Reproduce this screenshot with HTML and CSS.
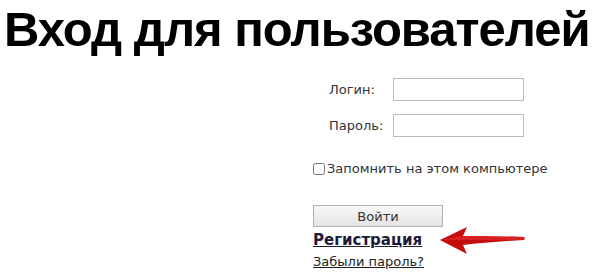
FILE: index.html
```html
<!DOCTYPE html>
<html lang="ru">
<head>
  <meta charset="UTF-8">
  <meta name="viewport" content="width=device-width, initial-scale=1.0">
  <title>Вход для пользователей</title>
  <link rel="stylesheet" href="styles.css">
</head>
<body>
  <h1 class="title">Вход для пользователей</h1>
  <div class="login">
    <form class="login-form">
      <table class="fields">
        <tr>
          <td class="label">Логин:</td>
          <td><input type="text" class="field"></td>
        </tr>
        <tr>
          <td class="label">Пароль:</td>
          <td><input type="password" class="field"></td>
        </tr>
      </table>
      <label class="remember"><input type="checkbox" class="check">Запомнить на этом компьютере</label>
      <button type="button" class="submit">Войти</button>
      <a href="#" class="reg">Регистрация</a>
      <a href="#" class="forgot">Забыли пароль?</a>
      <svg class="arrow" width="88" height="30" viewBox="0 0 88 30">
        <path d="M1 14 L28 1 L24 10 Q50 10 85 11 Q86 12.5 85 14 Q50 16 24 19 L28 28 Z" fill="#c40d0d"/>
        <path d="M1 14 L24 10 Q50 10 85 11 Q86 12.5 85 14 Q50 14 24 14 Z" fill="#d82020"/>
      </svg>
    </form>
  </div>
</body>
</html>
```

FILE: styles.css
```css
body {
  margin: 0;
  background: #fff;
  font-family: "DejaVu Sans", "Noto Sans", sans-serif;
  color: #222;
}
.title {
  margin: 0;
  padding: 0 0 0 4px;
  font-family: "Liberation Sans", Arial, sans-serif;
  font-size: 49px;
  line-height: 58px;
  letter-spacing: -1px;
  font-weight: bold;
  color: #000;
  white-space: nowrap;
}
.login {
  padding: 20px 0 0 313px;
}
.login-form {
  position: relative;
  width: 240px;
}
.fields {
  border-collapse: collapse;
}
.fields td {
  padding: 0 0 13px 0;
}
.fields .label {
  width: 64px;
  padding-left: 16px;
  font-size: 13px;
  color: #333;
}
.field {
  display: block;
  box-sizing: border-box;
  width: 131px;
  height: 23px;
  border: 1px solid #bbb;
  margin: 0;
}
.remember {
  display: flex;
  align-items: center;
  margin-top: 11px;
  font-size: 13px;
  color: #333;
  white-space: nowrap;
}
.check {
  width: 12px;
  height: 12px;
  margin: 0 2px 0 0;
}
.submit {
  display: block;
  box-sizing: border-box;
  width: 130px;
  height: 22px;
  margin-top: 29px;
  border: 1px solid #b0b0b0;
  background: linear-gradient(#f8f8f8, #e4e4e4);
  font-family: "DejaVu Sans", sans-serif;
  font-size: 13px;
  color: #333;
}
.reg {
  display: block;
  margin-top: 4px;
  font-size: 15px;
  font-weight: bold;
  color: #1c1c3a;
}
.forgot {
  display: block;
  margin-top: 5px;
  font-size: 13px;
  color: #222;
}
.arrow {
  position: absolute;
  left: 126px;
  top: 148px;
}
```
